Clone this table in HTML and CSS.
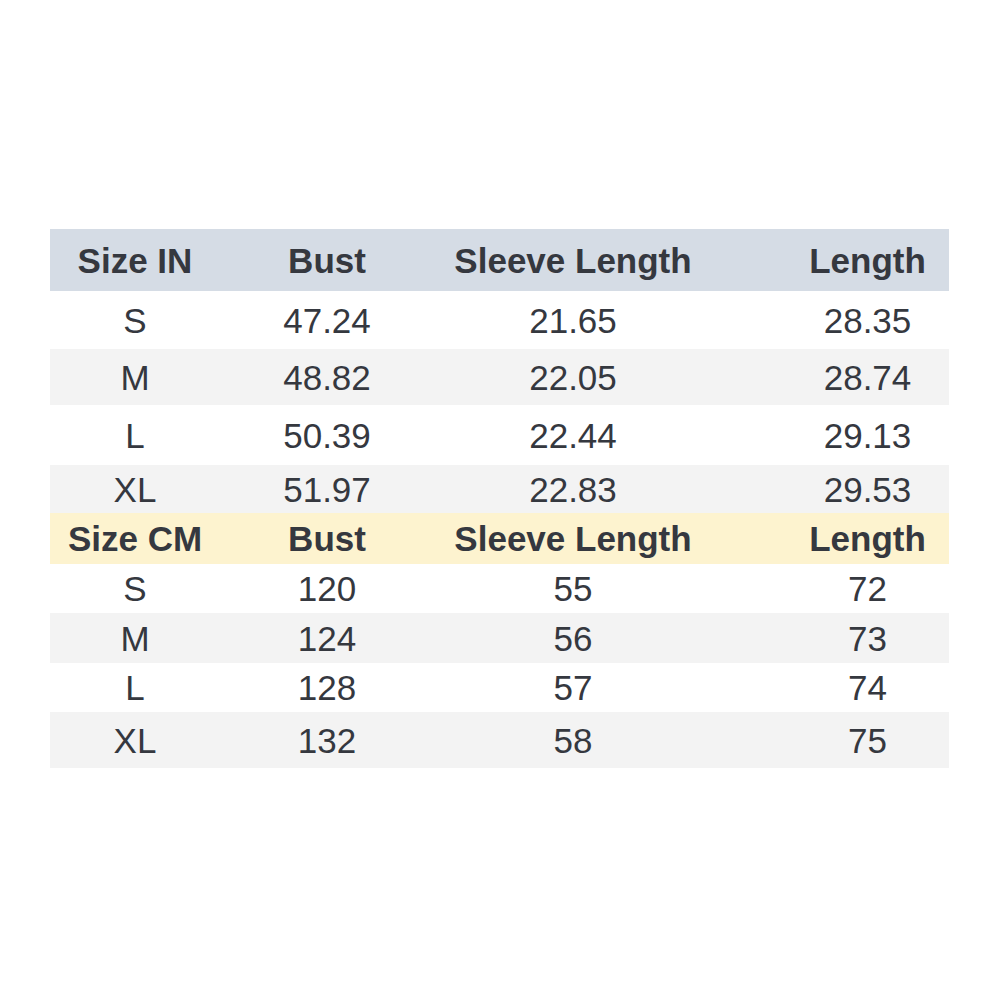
FILE: index.html
```html
<!DOCTYPE html>
<html>
<head>
<meta charset="utf-8">
<link rel="stylesheet" href="styles.css">
</head>
<body>
<div class="table">
  <div class="row head-in h62"><div>Size IN</div><div>Bust</div><div>Sleeve Length</div><div class="last">Length</div></div>
  <div class="row h58"><div>S</div><div>47.24</div><div>21.65</div><div class="last">28.35</div></div>
  <div class="row alt h56"><div>M</div><div>48.82</div><div>22.05</div><div class="last">28.74</div></div>
  <div class="row h60"><div>L</div><div>50.39</div><div>22.44</div><div class="last">29.13</div></div>
  <div class="row alt h48"><div>XL</div><div>51.97</div><div>22.83</div><div class="last">29.53</div></div>
  <div class="row head-cm h51"><div>Size CM</div><div>Bust</div><div>Sleeve Length</div><div class="last">Length</div></div>
  <div class="row h49"><div>S</div><div>120</div><div>55</div><div class="last">72</div></div>
  <div class="row alt h50"><div>M</div><div>124</div><div>56</div><div class="last">73</div></div>
  <div class="row h49"><div>L</div><div>128</div><div>57</div><div class="last">74</div></div>
  <div class="row alt h56"><div>XL</div><div>132</div><div>58</div><div class="last">75</div></div>
</div>
</body>
</html>
```
FILE: styles.css
```css
html, body {
  margin: 0;
  padding: 0;
  background: #ffffff;
}
body {
  font-family: "Liberation Sans", Arial, sans-serif;
  color: #35383f;
}
.table {
  margin: 229px 0 0 50px;
  width: 899px;
  display: flex;
  flex-direction: column;
}
.row {
  display: grid;
  grid-template-columns: 170px 214px 278px 237px;
  align-items: center;
  font-size: 35px;
  line-height: 1;
  text-align: center;
  background: #ffffff;
}
.row .last {
  padding-left: 74px;
}
.alt { background: #f3f3f3; }
.head-in {
  background: #d5dce5;
  font-weight: bold;
}
.head-cm {
  background: #fdf3cf;
  font-weight: bold;
}
.h62 { height: 62px; }
.h58 { height: 58px; }
.h56 { height: 56px; }
.h60 { height: 60px; }
.h48 { height: 48px; }
.h51 { height: 51px; }
.h49 { height: 49px; }
.h50 { height: 50px; }
```
